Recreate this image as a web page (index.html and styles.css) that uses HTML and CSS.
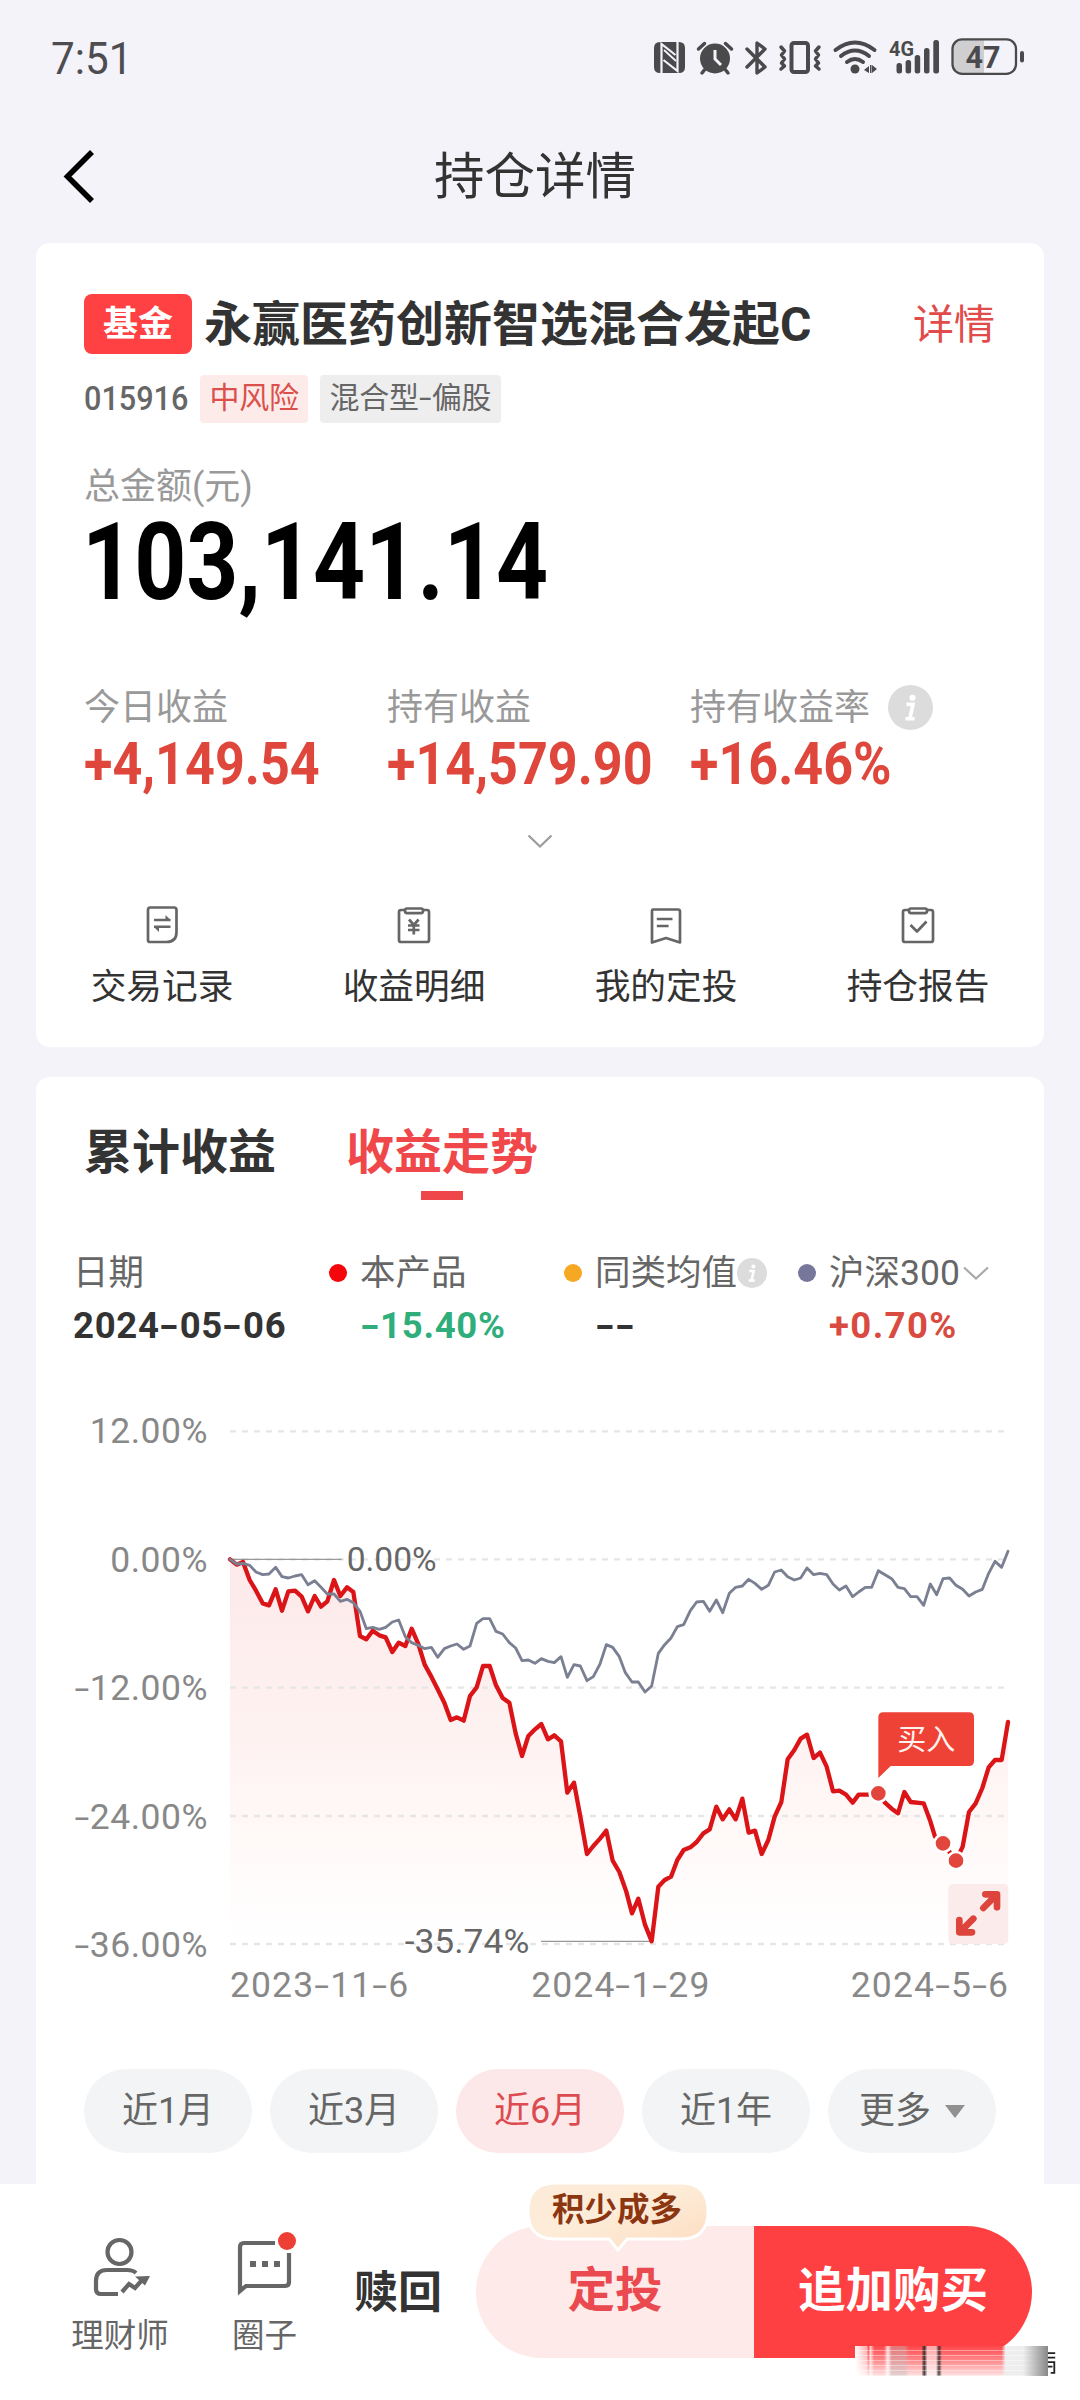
FILE: index.html
```html
<!DOCTYPE html>
<html lang="zh-CN">
<head>
<meta charset="utf-8">
<title>持仓详情</title>
<link rel="stylesheet" href="styles.css">
</head>
<body>
<div class="screen">
  <header class="status">
    <span class="time">7:51</span>
    <svg class="status-icons" viewBox="650 35 380 45" fill="#4a4a4d" stroke="none">
      <path fill-rule="evenodd" d="M660 42h19q6 0 6 6v19q0 6-6 6h-19q-6 0-6-6V48q0-6 6-6z"/>
      <g stroke="#f4f3f9" fill="none"><path d="M661.500 73V44l14 11M677.500 42v29l-14-11" stroke-width="2.200"/><path d="M664 50l12 11" stroke-width="1.800"/></g>
      <circle cx="715" cy="58.500" r="15"/>
      <path d="M698.500 49l6-5.500M731.500 49l-6-5.500M702 73l4-5M728 73l-4-5" stroke="#4a4a4d" stroke-width="3.500" stroke-linecap="round" fill="none"/>
      <path d="M715 50v9l6 6" stroke="#f4f3f9" stroke-width="3" fill="none"/>
      <path d="M747 49l18 18-8 6V43l8 6-18 18" stroke="#4a4a4d" stroke-width="3.400" fill="none" stroke-linejoin="round" stroke-linecap="round"/>
      <rect x="791.500" y="43" width="16.500" height="29" rx="2.500" fill="none" stroke="#4a4a4d" stroke-width="4"/>
      <path d="M781 47l3.500 4-3 4 3 4-3 4 3 3-3.500 3M819 47l-3.500 4 3 4-3 4 3 4-3 3 3.500 3" fill="none" stroke="#4a4a4d" stroke-width="3.500" stroke-linecap="round" stroke-linejoin="round"/>
      <g fill="none" stroke="#4a4a4d" stroke-width="4" stroke-linecap="round"><path d="M835.500 50q19.500-15 39 0M841 56q14-11 28 0M847 62q8-6 16 0"/></g>
      <circle cx="855" cy="69" r="4.500"/><path d="M864 70l5-4v7zM877 69l-5-4v8zM870 65h1.500v8H870z"/>
      <text x="889" y="56" class="net" textLength="25" lengthAdjust="spacingAndGlyphs">4G</text>
      <rect x="896.500" y="63" width="5.500" height="10.500" rx="2.500"/><rect x="905.600" y="60" width="5.500" height="13.500" rx="2.500"/><rect x="914.700" y="55" width="5.500" height="18.500" rx="2.500"/><rect x="924" y="48" width="5.500" height="25.500" rx="2.500"/><rect x="933.300" y="40" width="5.700" height="33.500" rx="2.500"/>
      <path d="M961 40h23v33h-23q-8 0-8-8V48q0-8 8-8z" fill="#cfcfd2"/>
      <rect x="952.500" y="39.300" width="63.500" height="34.500" rx="9.500" fill="none" stroke="#4a4a4d" stroke-width="2.300"/>
      <rect x="1020" y="51" width="4" height="11.500" rx="2"/>
      <text x="965.500" y="68" class="batt" textLength="35" lengthAdjust="spacingAndGlyphs">47</text>
    </svg>
  </header>
  <nav class="titlebar">
    <svg class="back" viewBox="0 0 36 60"><path d="M31 5L6.500 29.500 31 54" fill="none" stroke="#000" stroke-width="5.600"/></svg>
    <h1>持仓详情</h1>
  </nav>

  <section class="card summary">
    <div class="fund">
      <span class="tag">基金</span><h2>永赢医药创新智选混合发起C</h2><a class="more">详情</a>
    </div>
    <div class="meta">
      <span class="code"><b>015916</b></span><span class="chip risk">中风险</span><span class="chip">混合型<s>-</s>偏股</span>
    </div>
    <div class="label total-label">总金额(元)</div>
    <div class="total">103,141.14</div>
    <div class="gains">
      <div><div class="label">今日收益</div><div class="gain">+4,149.54</div></div>
      <div><div class="label">持有收益</div><div class="gain">+14,579.90</div></div>
      <div><div class="label">持有收益率
        <svg class="info" viewBox="0 0 44 44"><circle cx="22" cy="22" r="22" fill="#dcdcdc"/><circle cx="24" cy="12.500" r="3" fill="#fff"/><path d="M18 19h6.500l-3 13M17 33h9" fill="none" stroke="#fff" stroke-width="3.600"/></svg></div><div class="gain">+16.46%</div></div>
    </div>
    <svg class="expand" viewBox="0 0 26 14"><path d="M1.500 1.500L13 12.500 24.500 1.500" fill="none" stroke="#9b9b9b" stroke-width="2.200"/></svg>
    <div class="actions">
      <div><svg viewBox="0 0 40 40"><path d="M8 2.500h24q2.500 0 2.500 2.500v22q0 10-10 10H8q-2 0-2-2V5q0-2.500 2-2.500z"/><path d="M12 15h16.500M12 21.700h16.500" stroke-width="2.600"/><path class="solid" d="M23.500 10l5 5h-5zM17 27l-5-5h5z"/></svg>交易记录</div>
      <div><svg viewBox="0 0 40 40"><path d="M11 5H7q-2 0-2 2v28q0 2 2 2h26q2 0 2-2V7q0-2-2-2h-4"/><rect x="11" y="3.500" width="18" height="4.600" rx="2"/><path d="M15 14.500l4.800 5.500 4.800-5.500M19.800 20v9.500M14 20.500h11.500M14 25h11.500"/></svg>收益明细</div>
      <div><svg viewBox="0 0 40 40"><path d="M7 4.500h25q2 0 2 2v31l-14-4.500-14 4.500v-31q0-2 1-2z"/><path d="M10.800 14h15.700M10.800 21h11.800"/></svg>我的定投</div>
      <div><svg viewBox="0 0 40 40"><path d="M11 5H7q-2 0-2 2v28q0 2 2 2h26q2 0 2-2V7q0-2-2-2h-4"/><rect x="11" y="3.500" width="18" height="4.600" rx="2"/><path d="M12.500 20l6.500 6.500 9.500-10"/></svg>持仓报告</div>
    </div>
  </section>

  <section class="card trend">
    <div class="tabs"><span>累计收益</span><span class="on">收益走势</span></div>
    <div class="legend">
      <div><div class="name">日期</div><div class="val">2024<s>-</s>05<s>-</s>06</div></div>
      <div><div class="name"><i class="dot red"></i>本产品</div><div class="val down"><s>-</s>15.40%</div></div>
      <div><div class="name"><i class="dot amber"></i>同类均值<svg class="info small" viewBox="0 0 44 44"><circle cx="22" cy="22" r="22" fill="#dcdcdc"/><circle cx="24" cy="12.500" r="3" fill="#fff"/><path d="M18 19h6.500l-3 13M17 33h9" fill="none" stroke="#fff" stroke-width="3.600"/></svg></div><div class="val"><s>-</s><s>-</s></div></div>
      <div><div class="name"><i class="dot slate"></i>沪深300<svg class="drop" viewBox="0 0 26 14"><path d="M1 1.500L13 12.500 25 1.500" fill="none" stroke="#aaa" stroke-width="2.200"/></svg></div><div class="val up">+0.70%</div></div>
    </div>
    <div class="chart">
      <div class="yaxis"><span>12.00%</span><span>0.00%</span><span><s>-</s>12.00%</span><span><s>-</s>24.00%</span><span><s>-</s>36.00%</span></div>
      <svg class="plot" viewBox="60 -300 2340 1602">
        <defs><linearGradient id="fade" x1="0" y1="118" x2="0" y2="1272" gradientUnits="userSpaceOnUse"><stop offset="0" stop-color="#fde9ea"/><stop offset=".5" stop-color="#fef3f2"/><stop offset=".8" stop-color="#fffbfa"/><stop offset="1" stop-color="#fff"/></linearGradient></defs>
        <path fill="url(#fade)" d="M60 1272V118L80 134 99 126 119 180 138 212 158 250 177 256 197 208 216 272 235 214 255 212 275 230 294 274 314 228 333 260 352 244 372 180 391 228 411 202 430 216 450 348 469 358 488 332 508 346 527 352 547 396 566 368 586 378 605 326 625 372 644 434 683 508 722 600 761 602 780 528 800 502 819 438 839 438 858 496 878 534 898 548 917 640 936 708 955 648 994 612 1014 658 1033 646 1053 664 1072 818 1092 788 1131 1002 1189 932 1208 1022 1248 1112 1266 1180 1285 1136 1305 1214 1325 1264 1345 1100 1383 1070 1402 1020 1421 990 1460 966 1499 928 1519 860 1538 898 1558 868 1577 898 1597 836 1616 938 1635 932 1655 1002 1675 960 1694 890 1714 846 1733 718 1772 656 1791 644 1811 714 1830 698 1850 740 1869 814 1928 848 1946 824 2005 820 2064 880 2083 816 2102 846 2141 850 2175 950 2199 970 2238 1022 2258 980 2277 876 2317 804 2336 742 2375 720 2394 606V1272z"/>
        <path class="grid" d="M60-266H2394M60 118H2394M60 503H2394M60 888H2394M60 1272H2394"/>
        <path class="lead" d="M60 118H395M993 1264H1325"/>
        <polyline class="fundline" points="60,118 80,134 99,126 119,180 138,212 158,250 177,256 197,208 216,272 235,214 255,212 275,230 294,274 314,228 333,260 352,244 372,180 391,228 411,202 430,216 450,348 469,358 488,332 508,346 527,352 547,396 566,368 586,378 605,326 625,372 644,434 664,470 683,508 703,548 722,600 741,592 761,602 780,528 800,502 819,438 839,438 858,496 878,534 898,548 917,640 936,708 955,648 975,628 994,612 1014,658 1033,646 1053,664 1072,818 1092,788 1111,890 1131,1002 1150,978 1170,956 1189,932 1208,1022 1228,1056 1248,1112 1266,1180 1285,1136 1305,1214 1325,1264 1345,1100 1364,1080 1383,1070 1402,1020 1421,990 1441,982 1460,966 1480,940 1499,928 1519,860 1538,898 1558,868 1577,898 1597,836 1616,938 1635,932 1655,1002 1675,960 1694,890 1714,846 1733,718 1753,690 1772,656 1791,644 1811,714 1830,698 1850,740 1869,814 1888,812 1908,824 1928,848 1946,824 1975,824 2005,820 2025,848 2045,866 2064,880 2083,816 2102,846 2141,850 2161,904 2175,950 2199,970 2238,1022 2258,980 2277,876 2297,850 2317,804 2336,742 2355,720 2375,720 2394,606"/>
        <polyline class="indexline" points="60,118 80,132 99,130 119,136 138,156 158,164 177,162 197,142 216,170 235,174 255,168 275,164 294,194 314,182 333,202 352,222 372,222 391,244 411,238 430,248 450,274 469,326 488,322 508,328 527,322 547,306 566,300 586,350 605,368 625,376 644,386 664,382 683,412 703,386 722,378 741,372 761,388 780,378 800,310 819,296 839,296 858,334 878,342 898,368 917,384 936,422 955,420 975,430 994,416 1014,424 1033,428 1053,410 1072,472 1092,434 1111,438 1131,482 1150,470 1170,432 1189,374 1208,382 1228,410 1246,458 1266,486 1285,486 1305,516 1325,498 1345,400 1364,374 1383,354 1402,320 1421,314 1441,272 1460,246 1480,244 1499,274 1519,240 1538,278 1558,220 1577,202 1597,198 1616,178 1635,190 1655,208 1675,196 1694,156 1714,150 1733,170 1753,180 1772,174 1791,144 1811,164 1830,160 1850,164 1869,192 1888,210 1908,198 1928,230 1946,216 1966,202 1985,202 2005,152 2025,164 2045,176 2064,202 2083,206 2102,230 2121,230 2141,256 2161,192 2180,224 2199,176 2219,174 2238,196 2258,208 2277,228 2297,216 2317,208 2336,160 2355,124 2375,142 2394,94"/>
        <g class="note"><text x="410" y="152" textLength="270" lengthAdjust="spacingAndGlyphs">0.00%</text><text x="584" y="1298" textLength="374" lengthAdjust="spacingAndGlyphs">-35.74%</text></g>
        <g class="buy"><circle cx="2005" cy="820" r="26"/><circle cx="2199" cy="970" r="26"/><circle cx="2238" cy="1022" r="26"/></g>
        <path fill="#ee4236" d="M2020 577H2277q15 0 15 15V723q0 15-15 15H2042L2005 774V592q0-15 15-15z"/>
        <text class="buytext" x="2149" y="689">买入</text>
        <rect x="2215" y="1092" width="180" height="180" rx="14" fill="#fcebeb"/>
        <g fill="none" stroke="#dc443c" stroke-width="20"><path stroke-linecap="round" d="M2320 1164L2354 1130M2290 1196L2254 1232"/><path stroke-linejoin="round" stroke-linecap="round" d="M2326 1123H2361V1162M2248 1200V1237H2286"/></g>
      </svg>
      <div class="xaxis"><span>2023<s>-</s>11<s>-</s>6</span><span>2024<s>-</s>1<s>-</s>29</span><span>2024<s>-</s>5<s>-</s>6</span></div>
    </div>
    <div class="ranges"><span>近1月</span><span>近3月</span><span class="on">近6月</span><span>近1年</span><span>更多<i class="tri"></i></span></div>
  </section>

  <footer class="bar">
    <div class="item advisor"><svg viewBox="0 0 60 60" fill="none" stroke="#666" stroke-width="4.200"><circle cx="29.500" cy="16" r="12"/><path d="M46 37q-3-3-9-3H17q-11 0-11 11v8q0 5 5 5h17"/><path d="M32 56l7-8 6 4 8-9"/><path d="M60 40l-15 .5 10 9z" fill="#666" stroke="none"/></svg>理财师</div>
    <div class="item circle"><svg viewBox="0 0 60 60" fill="none" stroke="#666" stroke-width="4.200"><path d="M40 7H9q-4 0-4 4v44l6-5h39q4 0 4-4V17"/><path d="M3.500 50v8l8-7z" fill="#666" stroke="none"/><path d="M15 28h6M27 28h6M39 28h6" stroke-width="6"/><circle cx="52" cy="5" r="9" fill="#ee3f36" stroke="none"/></svg>圈子</div>
    <div class="redeem">赎回</div>
    <div class="buttons">
      <div class="invest">定投</div><div class="add">追加购买</div>
      <svg class="bubble" viewBox="0 0 184 70"><defs><linearGradient id="peach" x1="0" y1="0" x2="1" y2="1"><stop offset="0" stop-color="#fdebd9"/><stop offset=".45" stop-color="#fdecd8"/><stop offset="1" stop-color="#fddcc0"/></linearGradient></defs><path d="M29-1H155q27 0 27 28t-27 28H101l-9 11-9-11H29Q2 55 2 27T29-1z" fill="url(#peach)" stroke="#fff" stroke-width="3"/><text x="91" y="37">积少成多</text></svg>
    </div>
    <div class="smudge"><i></i><svg viewBox="0 0 10 26"><path d="M0 2h8M0 7h8M0 12h7v12H3M0 17h5" fill="none" stroke="#222" stroke-width="2"/></svg></div>
  </footer>
</div>
</body>
</html>
```
FILE: styles.css
```css
* { box-sizing: border-box; margin: 0; padding: 0; }
body { background: #f4f3f9; font-family: Roboto, "Noto Sans CJK SC", sans-serif; color: #333; }
.screen { width: 1080px; height: 2400px; overflow: hidden; display: flex; flex-direction: column; }
svg { display: block; overflow: visible; flex: none; }
i { font-style: normal; }
/* wide dash */
s { display: inline-block; text-decoration: none; transform: scaleX(1.500); margin: 0 2.500px; }

.status { height: 116px; padding: 33px 50px 0 51px; display: flex; justify-content: space-between; }
.time { font-size: 44px; line-height: 52px; color: #4d4d51; transform: scaleX(.96); transform-origin: left; }
.status-icons { width: 380px; height: 45px; margin-top: 2px; }
.net { font: 700 21px Roboto, sans-serif; }
.batt { font: 700 32px Roboto, sans-serif; }

.titlebar { height: 127px; display: flex; align-items: flex-start; padding: 31px 0 0 61px; }
.back { width: 36px; height: 60px; }
.titlebar h1 { margin-left: 337px; font-size: 50.500px; font-weight: 400; line-height: 59px; }

.card { width: 1008px; margin: 0 auto; background: #fff; border-radius: 14px; flex: none; }
.summary { height: 804px; padding-top: 51px; }
.fund { height: 60px; padding: 0 49px 0 48px; display: flex; align-items: center; }
.tag { width: 108px; height: 60px; border-radius: 8px; background: #ff4144; color: #fff; font-size: 35px; font-weight: 700; line-height: 62px; text-align: center; }
.fund h2 { margin-left: 12px; padding-top: 2px; font-size: 48px; font-weight: 700; line-height: 60px; white-space: nowrap; }
.more { margin-left: auto; padding-top: 2px; font-size: 41px; line-height: 60px; color: #e24b4b; }
.meta { height: 48px; margin: 21px 0 0 48px; display: flex; align-items: center; gap: 12px; }
.code { width: 104px; font-size: 34px; line-height: 44px; padding-bottom: 3px; color: #666; }
.code b { display: inline-block; font-weight: 500; transform: scaleX(.9); transform-origin: left; }
.chip { height: 48px; padding: 0 9.500px; border-radius: 4px; background: #eee; color: #666; font-size: 30px; line-height: 46px; letter-spacing: -.3px; }
.chip.risk { background: #fdebea; color: #dc504b; }
.label { height: 45px; font-size: 36px; line-height: 44px; color: #999; display: flex; align-items: center; }
.total-label { height: 44px; margin: 42px 0 0 48px; }
.total { margin: 1px 0 0 46px; font-size: 107px; font-weight: 700; line-height: 106px; color: #000; white-space: nowrap; transform: scaleX(.85); transform-origin: left; }
.gains { margin: 69px 0 0 48px; display: grid; grid-template-columns: 303px 303px 1fr; }
.gain { font-size: 59px; font-weight: 700; line-height: 68px; color: #df473c; transform: scaleX(.883); transform-origin: left; white-space: nowrap; }
.info { width: 45px; height: 45px; margin-left: 18px; }
.info.small { width: 30px; height: 30px; margin-left: 0; }
.expand { width: 26px; height: 14px; margin: 36px auto 0; }
.actions { margin-top: 57px; display: grid; grid-template-columns: repeat(4, 1fr); font-size: 35.700px; line-height: 44px; }
.actions div { display: flex; flex-direction: column; align-items: center; gap: 20px; }
.actions svg { width: 40px; height: 40px; fill: none; stroke: #666; stroke-width: 2.700; stroke-linejoin: round; }
.actions .solid { fill: #666; stroke: none; }

.trend { margin-top: 30px; height: 1107px; border-radius: 14px 14px 0 0; padding-top: 46px; }
.tabs { height: 79px; padding-left: 48px; display: flex; gap: 70px; font-size: 48px; font-weight: 700; line-height: 60px; }
.tabs .on { color: #f0484a; display: flex; flex-direction: column; align-items: center; }
.tabs .on::after { content: ""; width: 42px; height: 9px; margin-top: 8px; background: #ee4649; }
.legend { margin: 49px 0 0 37px; display: grid; grid-template-columns: 287px 235px 234px 1fr; }
.name { display: flex; align-items: center; font-size: 35.500px; line-height: 44px; color: #666; white-space: nowrap; }
.dot { width: 18px; height: 18px; margin: 0 13px 0 -31px; border-radius: 50%; }
.red { background: #f5060a; } .amber { background: #f7a823; } .slate { background: #77779b; }
.drop { width: 26px; height: 14px; margin-left: 3px; }
.val { margin-top: 10px; font-size: 36.500px; font-weight: 700; line-height: 42px; letter-spacing: .7px; white-space: nowrap; }
.down { color: #2fae7b; } .up { color: #d94b40; letter-spacing: 1.400px; }
.chart { margin: 64px 0 0 36px; display: grid; grid-template-columns: 136px 22px 780px; grid-template-rows: 554px auto; }
.yaxis { display: flex; flex-direction: column; justify-content: space-between; align-items: flex-end; font-size: 35.500px; line-height: 40px; color: #888; letter-spacing: .5px; white-space: nowrap; }
.plot { width: 780px; height: 534px; grid-column: 3; margin-top: 9px; }
.grid { fill: none; stroke: #e6e6e6; stroke-width: 7; stroke-dasharray: 18 18; }
.lead { stroke: #999; stroke-width: 4; }
.fundline { fill: none; stroke: #da1417; stroke-width: 13; stroke-linejoin: round; stroke-linecap: round; }
.indexline { fill: none; stroke: #7a8092; stroke-width: 8.500; stroke-linejoin: round; stroke-linecap: round; }
.note { font: 102px Roboto, sans-serif; fill: #666; }
.buy { fill: #e2453c; stroke: #fff; stroke-width: 8; }
.buytext { font: 87px "Noto Sans CJK SC", sans-serif; fill: #fff3ee; text-anchor: middle; }
.xaxis { grid-column: 3; width: 779px; display: flex; font-size: 35.500px; line-height: 40px; color: #888; letter-spacing: 1.100px; white-space: nowrap; }
.xaxis span:nth-child(2) { margin-left: 122px; }
.xaxis span:nth-child(3) { margin-left: auto; }
.ranges { margin: 64px 0 0 48px; display: flex; gap: 18px; font-size: 36px; line-height: 82px; color: #666; }
.ranges span { width: 168px; height: 84px; border-radius: 42px; background: #f2f4f5; display: flex; justify-content: center; align-items: center; }
.ranges .on { background: #fde8e9; color: #dc4b50; }
.tri { margin-left: 14px; border: 10px solid transparent; border-top: 13px solid #909090; border-bottom: 0; }

.bar { position: relative; height: 216px; flex: none; background: #fff; display: flex; }
.item { font-size: 32.500px; line-height: 40px; color: #666; display: flex; flex-direction: column; align-items: center; gap: 20px; padding-top: 52px; white-space: nowrap; }
.item svg { width: 60px; height: 60px; }
.advisor { margin-left: 71px; width: 98px; }
.circle { margin-left: 64px; width: 63px; }
.redeem { margin: 79px 0 0 58px; width: 88px; font-size: 44px; font-weight: 700; line-height: 60px; }
.buttons { position: relative; margin: 42px 0 0 34px; width: 556px; height: 132px; display: flex; font-size: 47.500px; font-weight: 700; line-height: 130px; text-align: center; }
.invest { flex: 1; border-radius: 66px 0 0 66px; background: #fdeae9; color: #ea4a4f; }
.add { flex: 1; border-radius: 0 66px 66px 0; background: #ff4043; color: #fff; }
.bubble { position: absolute; left: 50px; top: -42px; width: 184px; height: 70px; }
.bubble text { font: 700 32.500px "Noto Sans CJK SC", sans-serif; fill: #8c3511; text-anchor: middle; }
.smudge { position: absolute; left: 855px; top: 162px; width: 202px; height: 30px; display: flex; }
.smudge i { width: 193px; height: 30px; background: linear-gradient(90deg, #0000 87%, #888 100%), repeating-linear-gradient(0deg, #fff6 0 1px, #0000 1px 5px), linear-gradient(90deg, #fff 0, #fff8 6%, #fff0 7%, #fffb 8%, #fff0 10% 15%, #fffc 17%, #bbb6 19% 26%, #0000 28% 34.500%, #2228 35.200%, #222c 36%, #fff8 37.500% 42%, #222c 43.500%, #0000 45%), linear-gradient(90deg, #0000 76%, #eee 78%), linear-gradient(#ff4649, #ff8587 45%, #ffe4e4); }
.smudge svg { width: 9px; height: 26px; margin-top: 4px; }
```
